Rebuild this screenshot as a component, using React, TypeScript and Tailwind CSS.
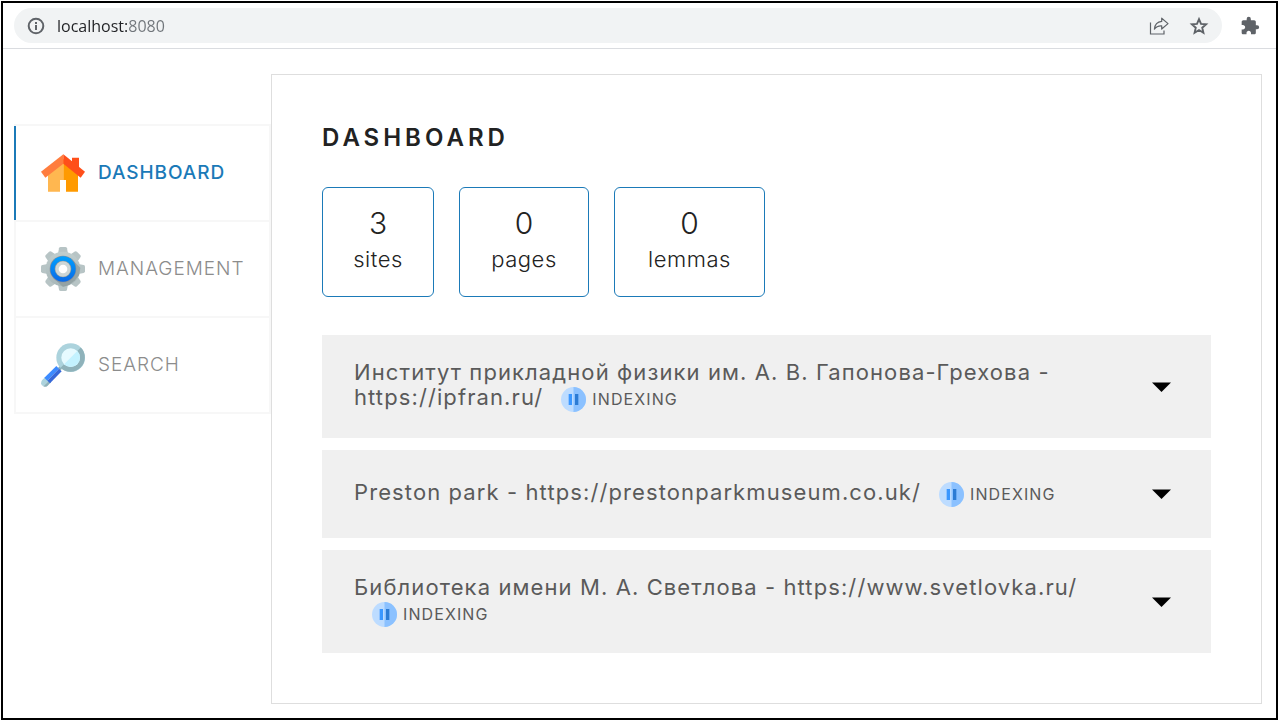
import { useState } from "react";
import type { ReactNode } from "react";
import { MdExtension } from "react-icons/md";

function InfoIcon() {
  return (
    <svg viewBox="0 0 20 20" className="size-5" fill="none" stroke="#5f6368" strokeWidth="2" aria-hidden="true">
      <circle cx="10" cy="10" r="7.300" />
      <path d="M10 9V14M10 6V8" />
    </svg>
  );
}

function ShareIcon() {
  return (
    <svg viewBox="0 0 20 20" className="size-5" fill="none" stroke="#5f6368" strokeWidth="1.2" aria-hidden="true">
      <path d="M1.500 6.5V18H15V14.5" />
      <path d="M12.7 2.200L19 7.6L12.7 13V9.8C9.500 9.6 7.100 10.6 5.400 13.2C5.800 8.8 8.300 5.8 12.7 5.4Z" strokeLinejoin="round" />
    </svg>
  );
}

function StarIcon() {
  return (
    <svg viewBox="0 0 22 22" className="size-[22px]" fill="none" stroke="#5f6368" strokeWidth="1.9" aria-hidden="true">
      <path d="M11 4.200L13 8.900L18.100 9.350L14.250 12.700L15.400 17.700L11 15.050L6.600 17.700L7.750 12.700L3.900 9.350L9 8.900Z" />
    </svg>
  );
}

function HouseIcon() {
  return (
    <svg viewBox="0 0 132 132" className="size-11" aria-hidden="true">
      <path d="M21 56L67 24V87H57V122H21Z" fill="#ffb750" />
      <path d="M67 24L111 56V122H75V87H67Z" fill="#ff9a00" />
      <path d="M93 20H114V58L93 42Z" fill="#ff4f1a" />
      <path d="M67 10L0 62L13 80L67 38Z" fill="#ff7d3e" />
      <path d="M67 10L132 62L119 80L67 38Z" fill="#ff4f1a" />
    </svg>
  );
}

const teeth = [0, 45, 90, 135, 180, 225, 270, 315];

function GearIcon() {
  return (
    <svg viewBox="0 0 132 132" className="size-11" aria-hidden="true">
      <defs>
        <linearGradient id="gear-body" x1="0" y1="0" x2="0" y2="132" gradientUnits="userSpaceOnUse">
          <stop offset="0" stopColor="#c3d0d0" />
          <stop offset="1" stopColor="#a5b4b6" />
        </linearGradient>
        <linearGradient id="gear-ring" x1="0" y1="0" x2="0" y2="1">
          <stop offset="0" stopColor="#00a0ff" />
          <stop offset="1" stopColor="#0a69e6" />
        </linearGradient>
      </defs>
      <g fill="#b7c4c5">
        {teeth.map((angle) => (
          <path key={angle} d="M51 20L54 4Q55 0 59 0H73Q77 0 78 4L81 20Z" transform={`rotate(${angle} 66 66)`} />
        ))}
      </g>
      <circle cx="66" cy="66" r="52" fill="url(#gear-body)" />
      <path d="M94 38L118 62L114 84L102 100L84 114L66 120L38 94Z" fill="#829092" opacity="0.55" />
      <circle cx="66" cy="66" r="40" fill="#8a8f98" />
      <circle cx="66" cy="66" r="38" fill="url(#gear-ring)" />
      <circle cx="66" cy="66" r="25" fill="#8b999d" />
      <circle cx="66" cy="66" r="23" fill="#cdd6d6" />
      <circle cx="66" cy="66" r="13" fill="#ffffff" />
    </svg>
  );
}

function MagnifierIcon() {
  return (
    <svg viewBox="0 0 132 132" className="size-11" aria-hidden="true">
      <path d="M50 76L60 65L68 73L57 83Z" fill="#8fb2ba" />
      <path d="M3 112L13 102L24 113L7 130Q-4 125 3 112Z" fill="#acd3dd" />
      <path d="M24 113L30 118L20 128Q13 134 7 130Z" fill="#8fb2ba" />
      <path d="M10 104L46 69L54 77L19 113Z" fill="#3d8bff" />
      <path d="M19 113L54 77L62 85L27 121Z" fill="#3768d8" />
      <circle cx="89" cy="44" r="43" fill="#acd3dd" />
      <path d="M119.400 13.600A43 43 0 0 1 58.600 74.400Z" fill="#8fb2ba" />
      <circle cx="89" cy="44" r="28" fill="#e6faff" />
      <path d="M108.800 24.200A28 28 0 0 1 69.200 63.800Z" fill="#c3f2ff" />
    </svg>
  );
}

function PauseIcon() {
  return (
    <svg viewBox="0 0 75 75" className="size-[25px] shrink-0" aria-hidden="true">
      <circle cx="37.500" cy="37.500" r="37.500" fill="#bddcff" />
      <path d="M37.500 0A37.500 37.500 0 0 1 37.500 75Z" fill="#8bc1ff" />
      <rect x="23" y="21" width="10" height="33" fill="#3a97ff" />
      <rect x="42" y="21" width="10" height="33" fill="#2b7bd4" />
    </svg>
  );
}

type NavItem = { label: string; icon: ReactNode };

const navItems: NavItem[] = [
  { label: "DASHBOARD", icon: <HouseIcon /> },
  { label: "MANAGEMENT", icon: <GearIcon /> },
  { label: "SEARCH", icon: <MagnifierIcon /> },
];

const stats = [
  { value: 3, label: "sites", width: "min-w-28" },
  { value: 0, label: "pages", width: "min-w-[130px]" },
  { value: 0, label: "lemmas", width: "min-w-[151px]" },
];

const sites = [
  { name: "Институт прикладной физики им. А. В. Гапонова-Грехова", url: "https://ipfran.ru/" },
  { name: "Preston park", url: "https://prestonparkmuseum.co.uk/" },
  { name: "Библиотека имени М. А. Светлова", url: "https://www.svetlovka.ru/" },
];

function BrowserBar() {
  const [address, setAddress] = useState("localhost:8080");
  return (
    <header className="flex items-center border-b border-[#dadce0] py-[5px] pr-4 pl-[11px]">
      <div className="flex h-[35px] grow items-center rounded-full bg-[#f1f3f4] px-3">
        <button type="button" aria-label="View site information">
          <InfoIcon />
        </button>
        <input
          type="text"
          aria-label="Address"
          value={address}
          onChange={(e) => setAddress(e.target.value)}
          className="ml-[11px] min-w-0 grow bg-linear-to-r from-[#202124] from-[70px] to-[#70757a] to-[70px] bg-clip-text font-['Open_Sans','Noto_Sans',sans-serif] text-base leading-6 text-transparent caret-black outline-none"
        />
        <button type="button" aria-label="Share" className="mr-[19px]">
          <ShareIcon />
        </button>
        <button type="button" aria-label="Bookmark">
          <StarIcon />
        </button>
      </div>
      <button type="button" aria-label="Extensions" className="ml-[18px] text-[#5f6368]">
        <MdExtension className="size-5" />
      </button>
    </header>
  );
}

function Sidebar() {
  return (
    <nav aria-label="Main" className="mt-[50px] w-[257px] shrink-0 self-start border-r-2 border-b-2 border-[#f7f7f7]">
      <ul>
        {navItems.map((item, index) => (
          <li key={item.label} className="border-t-2 border-[#f7f7f7]">
            <a
              href={`#${item.label.toLowerCase()}`}
              aria-current={index === 0 ? "page" : undefined}
              className={
                index === 0
                  ? "flex h-[94px] items-center gap-[13px] border-l-2 border-[#1b7ab8] pl-[25px] text-[19px] leading-7 font-medium tracking-wider text-[#1b7ab8]"
                  : "flex h-[94px] items-center gap-[13px] border-l-2 border-[#f7f7f7] pl-[25px] text-[19px] leading-7 font-light tracking-wider text-[#8c8c8c]"
              }
            >
              {item.icon}
              <span>{item.label}</span>
            </a>
          </li>
        ))}
      </ul>
    </nav>
  );
}

export default function App() {
  return (
    <div className="min-h-screen bg-white p-px font-[Inter,'Open_Sans',sans-serif] text-[#222222]">
      <div className="flex min-h-[calc(100vh-2px)] flex-col border-2 border-black">
        <BrowserBar />
        <div className="flex grow pt-[25px] pr-3.5 pb-3.5 pl-[11px]">
          <Sidebar />
          <main className="min-w-0 grow border border-[#dedede] px-[50px] pt-[50px] pb-12">
            <h1 className="text-2xl leading-[25px] font-semibold tracking-[4px]">DASHBOARD</h1>
            <dl className="mt-[37px] flex flex-wrap gap-[25px]">
              {stats.map((stat) => (
                <div
                  key={stat.label}
                  className={`flex h-[110px] flex-col-reverse justify-end rounded-md border border-[#1b7ab8] px-6 pt-4 text-center font-light ${stat.width}`}
                >
                  <dt className="text-[22px] leading-[34px] tracking-wide">{stat.label}</dt>
                  <dd className="text-3xl leading-[38px]">{stat.value}</dd>
                </div>
              ))}
            </dl>
            <ul className="mt-[38px] flex flex-col gap-3">
              {sites.map((site) => (
                <li key={site.url}>
                  <button
                    type="button"
                    aria-expanded="false"
                    className="flex min-h-[88px] w-full items-center bg-[#f0f0f0] py-[25px] pr-10 pl-8 text-left text-[#5a5a5a]"
                  >
                    <span className="grow pr-14 text-[22px] leading-[25px] tracking-wider">
                      {site.name} - {site.url}
                      <span className="ml-[18px] inline-flex h-7 items-center gap-1.5 align-middle text-base">
                        <PauseIcon />
                        INDEXING
                      </span>
                    </span>
                    <svg viewBox="0 0 19 10" className="h-2.5 w-[19px] shrink-0" aria-hidden="true">
                      <path d="M0 0.500H19L9.500 10Z" fill="#000000" />
                    </svg>
                  </button>
                </li>
              ))}
            </ul>
          </main>
        </div>
      </div>
    </div>
  );
}
